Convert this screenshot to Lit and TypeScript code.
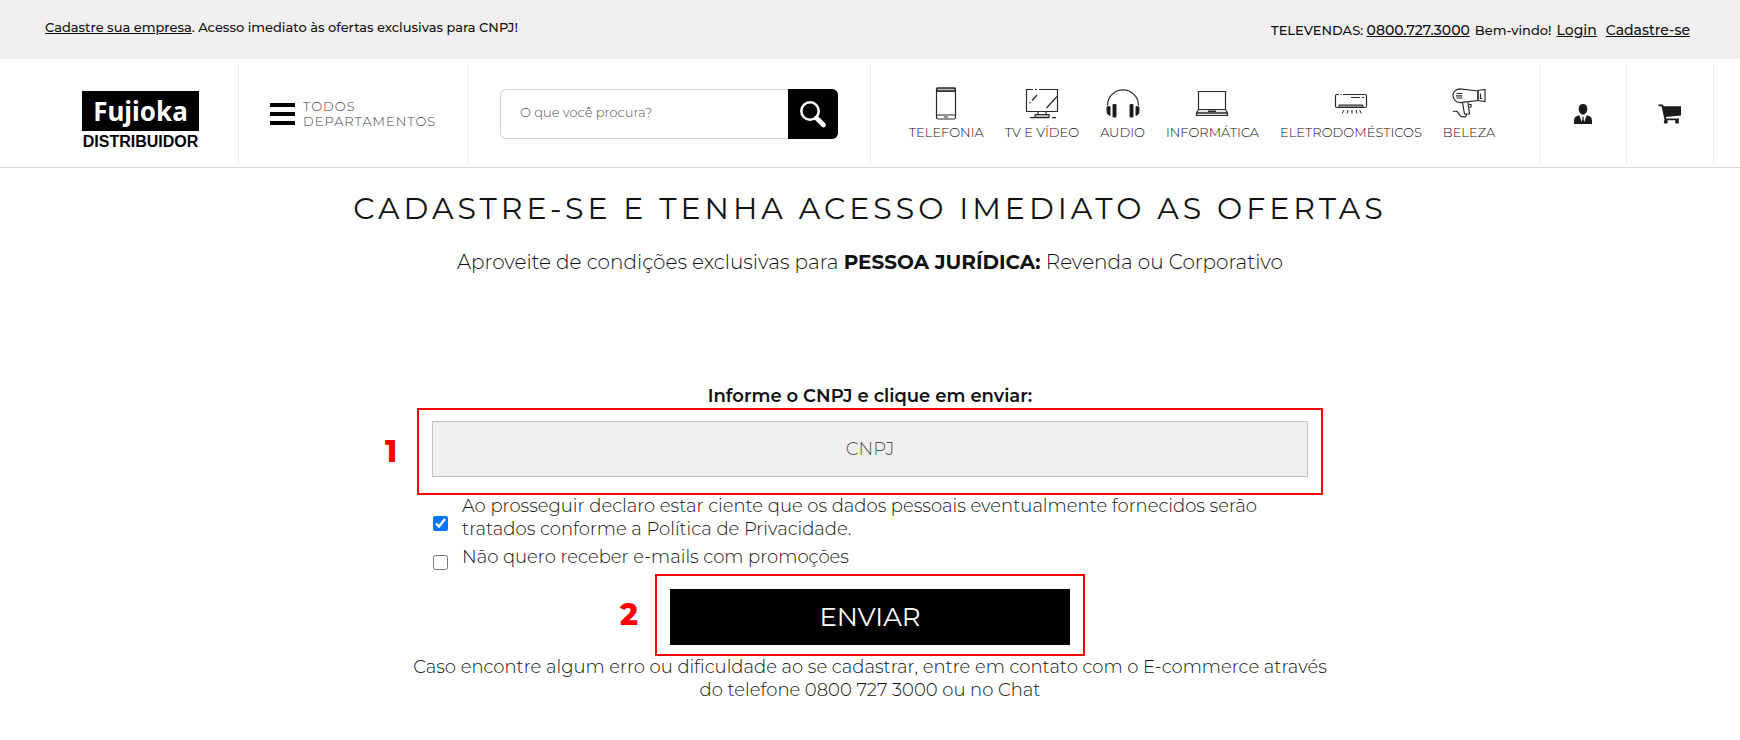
import { LitElement, html, css, svg } from "lit";
import { customElement, property, state } from "lit/decorators.js";

const icons: Record<string, unknown> = {
  phone: svg`
    <rect x="7.5" y="1" width="19" height="31" rx="1.5" fill="#fff"/>
    <path d="M8 1.200h18v3H8z" fill="#cbbfc0"/>
    <path d="M7.500 4.200h19M7.500 28h19M15 30h4"/>`,
  tv: svg`
    <path d="M8 2.500H1.500V24.500H32.500V2.500H14M10 2.500h2"/>
    <path d="M12 8 7 13.500M5.500 15.200l-1 1M32 9.500 21.500 21"/>
    <path d="M13 24.500v3h8v-3"/>
    <path d="M10 27.500h14v3H10z" fill="#b9b5b5"/>
    <path d="M5 30.700h19M27 30.700h4"/>`,
  audio: svg`
    <path d="M1.500 18.500a15.300 15.500 0 0 1 31 0"/>
    <path d="M4 19.500v9C2 28 1 26.500 1 23.500V20zM30 19.500v9c2-.5 3-2 3-5V20zM7 17.500h3V30H7zM24 17.500h3V30h-3z" fill="#1a1313" stroke-width="1"/>`,
  laptop: svg`
    <path d="M3.500 22.500V4.500H30.500V22.500"/>
    <path d="M3.500 22.500H30.500L32.500 26v2.500h-31V26z" fill="#e6e6e6"/>
    <path d="M1.500 26h31M13 24.200h8" stroke-width="1.600"/>`,
  air: svg`
    <path d="M5 7.500H3Q1.500 7.500 1.500 9V19Q1.500 20.500 3 20.500H31Q32.500 20.500 32.500 19V9Q32.500 7.500 31 7.500H9M6.500 7.500h1" />
    <path d="M5 20.500v-2.500H29v2.500z" fill="#8a8e8f" stroke-width="1"/>
    <path d="M17 10.500h9M28 10.500h2M10 23l-2 3.500M14 23l-1 3.500M18 23v3.500M22 23l1 3.500M25.500 23l2 3.500" stroke-width="1"/>`,
  dryer: svg`
    <path d="M26 4 8 1.800C4 1.800 1 5 1 8.500s3 7.200 7 7.200L26 13.500z"/>
    <path d="M26 3.500 33 2.500v12L26 13.500zM28.500 6.500v5h2M4.500 6.500h6M4 8.800h6M4.500 11h6"/>
    <path d="M10.500 15.700l2 11.300h5l-1.500-11.700M17 17.500h2v2.500h-1.500"/>
    <path d="M1 24.500c5-1 5 1 6.500 3.500s7.500 3 7-1"/>`,
};

interface Category {
  icon: string;
  label: string;
}

const categories: Category[] = [
  { icon: "phone", label: "TELEFONIA" },
  { icon: "tv", label: "TV E VÍDEO" },
  { icon: "audio", label: "AUDIO" },
  { icon: "laptop", label: "INFORMÁTICA" },
  { icon: "air", label: "ELETRODOMÉSTICOS" },
  { icon: "dryer", label: "BELEZA" },
];

const shared = css`
  :host,
  *,
  *::before,
  *::after {
    box-sizing: border-box;
  }
  a {
    color: inherit;
  }
  button,
  input {
    font-family: inherit;
  }
`;

@customElement("top-bar")
export class TopBar extends LitElement {
  static styles = [
    shared,
    css`
      :host {
        display: flex;
        justify-content: space-between;
        min-height: 59px;
        padding: 17px 50px 0 45px;
        background: #f1efef;
        color: #111;
        font-size: 13px;
        line-height: 20px;
        font-weight: 500;
      }
      .account {
        display: flex;
        align-items: baseline;
        gap: 5px;
        padding-top: 3px;
      }
      .large {
        font-size: 14px;
      }
      .large + .large {
        margin-left: 4px;
      }
    `,
  ];

  render() {
    return html`
      <div>
        <a href="#cadastro">Cadastre sua empresa</a>. Acesso imediato às ofertas
        exclusivas para CNPJ!
      </div>
      <div class="account">
        <span>TELEVENDAS: <a class="large" href="tel:08007273000">0800.727.3000</a></span>
        <span>Bem-vindo!</span>
        <a class="large" href="#login">Login</a>
        <a class="large" href="#cadastro">Cadastre-se</a>
      </div>
    `;
  }
}

@customElement("site-nav")
export class SiteNav extends LitElement {
  static styles = [
    shared,
    css`
      :host {
        display: grid;
        grid-template-columns: 239fr 229fr 403fr 669fr 87fr 87fr 26fr;
        padding: 5px 0 4px;
        border-bottom: 1px solid #d8d8d8;
      }
      .cell {
        display: flex;
        align-items: center;
        min-width: 0;
        height: 99px;
        border-right: 1px solid #ececec;
      }
      .cell:last-child {
        border-right: 0;
      }
      .brand {
        justify-content: center;
        padding-left: 43px;
        padding-top: 16px;
      }
      .logo {
        display: block;
        width: 117px;
        color: #000;
        text-decoration: none;
        text-align: center;
      }
      .name {
        display: block;
        background: #000;
        color: #fff;
        font: 700 26px/40px "Noto Sans", sans-serif;
      }
      .unit {
        display: block;
        font: 700 16px/22px "Liberation Sans", sans-serif;
      }
      .departments {
        display: flex;
        align-items: center;
        gap: 8px;
        margin-left: 31px;
        padding: 0;
        border: 0;
        background: none;
        color: #444;
        font-size: 13px;
        line-height: 15px;
        font-weight: 300;
        letter-spacing: 1px;
        text-align: left;
      }
      .bars {
        display: grid;
        gap: 5px;
        width: 25px;
      }
      .bars i {
        height: 4px;
        background: #000;
      }
      .search {
        display: flex;
        flex: 1;
        margin: 0 32px;
        height: 50px;
      }
      .query {
        flex: 1;
        min-width: 0;
        padding: 0 19px 4px;
        border: 1px solid #d5d5d5;
        border-right: 0;
        border-radius: 6px 0 0 6px;
        font-size: 13px;
        font-weight: 300;
        outline: 0;
      }
      .query::placeholder {
        color: #555;
      }
      .go {
        display: grid;
        place-items: center;
        width: 50px;
        padding: 0;
        border: 0;
        border-radius: 0 6px 6px 0;
        background: #000;
      }
      .categories {
        display: flex;
        justify-content: center;
        gap: 21px;
        flex: 1;
        margin: 0;
        padding: 0 6px 0 0;
        list-style: none;
      }
      .category {
        display: grid;
        justify-items: center;
        gap: 2px;
        color: #111;
        font-size: 13px;
        line-height: 18px;
        font-weight: 300;
        text-decoration: none;
        white-space: nowrap;
      }
      .category svg {
        fill: none;
        stroke: #2b2b2b;
        stroke-width: 1.2;
      }
      .shortcut {
        justify-content: center;
        color: #1b1b1b;
      }
      .shortcut a {
        display: grid;
      }
    `,
  ];

  render() {
    return html`
      <div class="cell brand">
        <a class="logo" href="#inicio">
          <span class="name">Fujioka</span>
          <span class="unit">DISTRIBUIDOR</span>
        </a>
      </div>
      <div class="cell">
        <button class="departments" type="button">
          <span class="bars"><i></i><i></i><i></i></span>
          <span>TODOS<br />DEPARTAMENTOS</span>
        </button>
      </div>
      <div class="cell">
        <form class="search" role="search" @submit=${(e: Event) => e.preventDefault()}>
          <input class="query" type="search" aria-label="Buscar produtos" placeholder="O que você procura?" />
          <button class="go" type="submit" aria-label="Buscar">
            <svg width="28" height="28" viewBox="0 0 28 28" fill="none" stroke="#fff" stroke-linecap="round">
              <circle cx="11" cy="11" r="8.700" stroke-width="2.600" />
              <path d="M17.500 18 24.500 25" stroke-width="4.600" />
            </svg>
          </button>
        </form>
      </div>
      <nav class="cell" aria-label="Categorias">
        <ul class="categories">
          ${categories.map(
            (c) => html`<li>
              <a class="category" href="#categoria">
                <svg width="34" height="34" viewBox="0 0 34 34" aria-hidden="true">${icons[c.icon]}</svg>
                ${c.label}
              </a>
            </li>`
          )}
        </ul>
      </nav>
      <div class="cell shortcut">
        <a href="#conta" aria-label="Minha conta">
          <svg width="20" height="22" viewBox="0 0 20 22" fill="#1b1b1b">
            <path d="M10 1c2.800 0 4.300 1.900 4.300 4.700 0 2.900-1.800 6-4.300 6s-4.300-3.100-4.300-6C5.700 2.900 7.200 1 10 1z" />
            <path d="M6.300 12.300 8.800 19l.8-4-.6-1.200h2l-.6 1.200.8 4 2.500-6.700c3.500 1 5.300 2.200 5.300 5.200V21H1v-3.500c0-3 1.800-4.200 5.300-5.200z" />
          </svg>
        </a>
      </div>
      <div class="cell shortcut">
        <a href="#carrinho" aria-label="Carrinho">
          <svg width="24" height="22" viewBox="0 0 24 22" fill="#1b1b1b">
            <path d="M.5 1.500H5l.6 1.700H23v9.300L7.800 14l.4 1.500H21v1.800H6.600L3.600 3.200H.5z" />
            <circle cx="7.800" cy="18.800" r="2" />
            <circle cx="19" cy="18.800" r="2" />
          </svg>
        </a>
      </div>
      <div class="cell"></div>
    `;
  }
}

@customElement("step-frame")
export class StepFrame extends LitElement {
  @property({ type: Number }) step = 1;

  static styles = css`
    :host {
      display: block;
      position: relative;
      border: 2px solid #f00;
      padding: 11px 13px 16px;
    }
    .number {
      position: absolute;
      right: calc(100% + 16px);
      top: 50%;
      width: 24px;
      margin-top: -20px;
      color: #f00;
      font-size: 30px;
      line-height: 40px;
      font-weight: 800;
      text-align: center;
    }
  `;

  render() {
    return html`<span class="number">${this.step}</span><slot></slot>`;
  }
}

@customElement("signup-form")
export class SignupForm extends LitElement {
  @state() private accepted = true;

  static styles = [
    shared,
    css`
      :host {
        display: block;
        max-width: 906px;
        margin: 0 auto;
        font-size: 18px;
        line-height: 23px;
        font-weight: 300;
        color: #111;
      }
      .title {
        display: block;
        text-align: center;
        font-weight: 600;
      }
      .cnpj {
        display: block;
        width: 100%;
        height: 56px;
        border: 1px solid #c4c4c4;
        background: #f1efef;
        font-size: 18px;
        font-weight: 300;
        text-align: center;
        outline: 0;
      }
      .cnpj::placeholder {
        color: #555;
      }
      .option {
        display: flex;
        align-items: center;
        gap: 14px;
        max-width: 850px;
        margin-bottom: 4px;
        padding-left: 16px;
      }
      .option input {
        flex: none;
        width: 15px;
        height: 15px;
        margin: 10px 0 0;
      }
      .action {
        max-width: 430px;
        margin: 0 auto;
        padding: 13px 13px 9px;
      }
      .send {
        display: block;
        width: 100%;
        height: 56px;
        padding: 0;
        border: 0;
        background: #000;
        color: #fff;
        font-size: 26px;
        font-weight: 400;
      }
      .help {
        margin: 0 -16px;
        text-align: center;
      }
    `,
  ];

  render() {
    return html`
      <form @submit=${(e: Event) => e.preventDefault()}>
        <label class="title" for="cnpj">Informe o CNPJ e clique em enviar:</label>
        <step-frame .step=${1}>
          <input class="cnpj" id="cnpj" type="text" inputmode="numeric" placeholder="CNPJ" />
        </step-frame>
        <label class="option">
          <input
            type="checkbox"
            .checked=${this.accepted}
            @change=${(e: Event) => (this.accepted = (e.target as HTMLInputElement).checked)}
          />
          <span>
            Ao prosseguir declaro estar ciente que os dados pessoais eventualmente fornecidos serão
            <br />tratados conforme a Política de Privacidade.
          </span>
        </label>
        <label class="option">
          <input type="checkbox" />
          <span>Não quero receber e-mails com promoções</span>
        </label>
        <step-frame class="action" .step=${2}>
          <button class="send" type="submit">ENVIAR</button>
        </step-frame>
        <p class="help">
          Caso encontre algum erro ou dificuldade ao se cadastrar, entre em contato com o E-commerce através
          <br />do telefone 0800 727 3000 ou no Chat
        </p>
      </form>
    `;
  }
}

@customElement("app-root")
export class AppRoot extends LitElement {
  static styles = css`
    :host {
      display: block;
      min-height: 100vh;
      background: #fff;
      color: #111;
      font-family: Montserrat, Inter, sans-serif;
    }
    main {
      padding: 21px 24px 0;
    }
    .headline {
      margin: 0;
      text-align: center;
      font-size: 30px;
      line-height: 40px;
      font-weight: 400;
      letter-spacing: 4px;
    }
    .lead {
      margin: 18px 0 108px;
      text-align: center;
      font-size: 20px;
      line-height: 30px;
      font-weight: 300;
    }
    .lead strong {
      font-weight: 700;
    }
  `;

  render() {
    return html`
      <header>
        <top-bar></top-bar>
        <site-nav></site-nav>
      </header>
      <main>
        <h1 class="headline">CADASTRE-SE E TENHA ACESSO IMEDIATO AS OFERTAS</h1>
        <p class="lead">
          Aproveite de condições exclusivas para <strong>PESSOA JURÍDICA:</strong> Revenda ou Corporativo
        </p>
        <signup-form id="cadastro"></signup-form>
      </main>
    `;
  }
}
